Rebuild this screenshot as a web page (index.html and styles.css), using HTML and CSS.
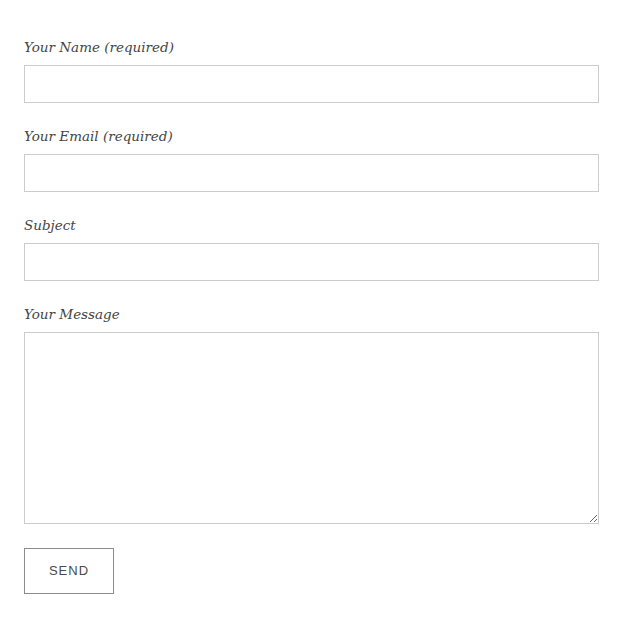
FILE: index.html
```html
<!DOCTYPE html>
<html>
<head>
<meta charset="utf-8">
<link rel="stylesheet" href="styles.css">
</head>
<body>
<form class="contact-form">
  <div class="field">
    <label class="field-label">Your Name (required)</label>
    <input class="field-input" type="text">
  </div>
  <div class="field">
    <label class="field-label">Your Email (required)</label>
    <input class="field-input" type="text">
  </div>
  <div class="field">
    <label class="field-label">Subject</label>
    <input class="field-input" type="text">
  </div>
  <div class="field">
    <label class="field-label">Your Message</label>
    <textarea class="field-textarea"></textarea>
  </div>
  <button class="send-button" type="button">SEND</button>
</form>
</body>
</html>
```
FILE: styles.css
```css
html, body {
  margin: 0;
  padding: 0;
  background: #fff;
}
.contact-form {
  display: flex;
  flex-direction: column;
  padding: 34px 27px 0 24px;
}
.field {
  display: flex;
  flex-direction: column;
  margin-bottom: 20px;
}
.field-label {
  font-family: "DejaVu Serif", Georgia, serif;
  font-style: italic;
  font-size: 13.5px;
  line-height: 22px;
  color: #444;
  padding-top: 2px;
  margin-bottom: 7px;
}
.field-input,
.field-textarea {
  box-sizing: border-box;
  width: 100%;
  height: 38px;
  border: 1px solid #cccccc;
  border-radius: 0;
  background: #fff;
  margin: 0;
  padding: 6px 8px;
  outline: none;
}
.field-textarea {
  height: 192px;
  resize: both;
  display: block;
}
.field:last-of-type {
  margin-bottom: 24px;
}
.send-button {
  align-self: flex-start;
  box-sizing: border-box;
  width: 90px;
  height: 46px;
  margin: 0;
  padding: 0 0 1px 0;
  background: #fff;
  border: 1px solid #8c8c8c;
  border-radius: 0;
  font-family: "Liberation Sans", Arial, sans-serif;
  font-size: 13px;
  letter-spacing: 1px;
  color: #4a4a4a;
  box-shadow: 0 1px 1px rgba(0,0,0,0.08);
}
```
